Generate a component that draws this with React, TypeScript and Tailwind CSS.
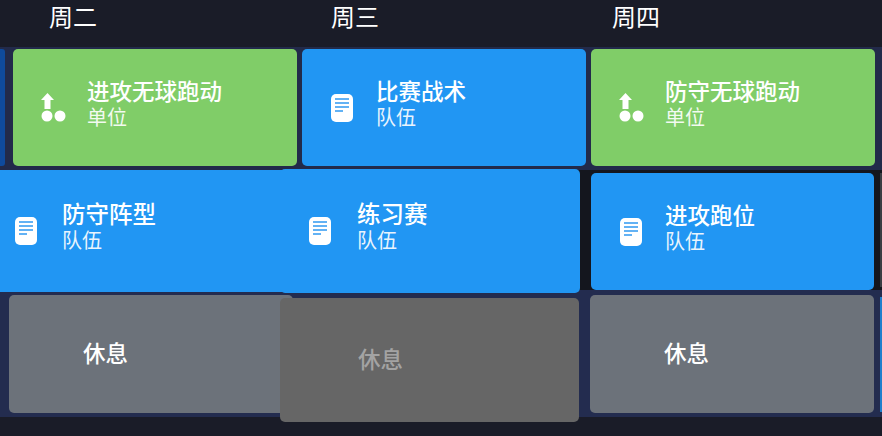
import React from 'react';

const FONT = "font-['Liberation_Sans','Noto_Sans_CJK_SC',sans-serif]";

const UnitIcon = () => (
  <svg width="25" height="29" viewBox="0 0 25 29" fill="white">
    <path d="M6.5 0 L13 7 H9.5 V16 H3.5 V7 H0 Z" />
    <circle cx="6" cy="23" r="5.5" />
    <circle cx="19" cy="23" r="5.5" />
  </svg>
);

const TeamIcon = () => (
  <svg width="22" height="28" viewBox="0 0 22 28">
    <rect x="0" y="0" width="22" height="28" rx="5" fill="white" />
    <path d="M4 5 H18 M4 9 H18 M4 13 H18 M4 17 H12" stroke="#63b2f4" strokeWidth="2.2" />
  </svg>
);

type CardProps = {
  title: string;
  sub?: string;
  kind: 'unit' | 'team' | 'rest';
  className: string;
  textClass?: string;
  labelClass?: string;
  titleClass?: string;
};

const Card = ({
  title,
  sub,
  kind,
  className,
  textClass = 'text-white',
  labelClass = '',
  titleClass = 'text-[22.5px]',
}: CardProps) => (
  <div className={`flex items-center rounded-[5px] ${className}`}>
    {kind === 'rest' ? (
      <div className={`${textClass} mt-[2px] ml-[74px] text-[22.5px] leading-7 font-medium`}>{title}</div>
    ) : (
      <>
        <div className="flex w-[74px] shrink-0 justify-center pl-[6px]">
          {kind === 'unit' ? <UnitIcon /> : <TeamIcon />}
        </div>
        <div className={`-mt-[6px] text-white ${labelClass}`}>
          <div className={`${titleClass} leading-[27px] font-medium`}>{title}</div>
          <div className="text-[20px] leading-[25px] opacity-90">{sub}</div>
        </div>
      </>
    )}
  </div>
);

export default function App() {
  return (
    <div className={`${FONT} relative h-[436px] w-[882px] overflow-hidden bg-[#1a1c28]`}>
      <div className="flex h-[49px]">
        <div className="w-[331px] pl-[49px] text-[24px] leading-[36px] text-white">周二</div>
        <div className="w-[281px] text-[24px] leading-[36px] text-white">周三</div>
        <div className="text-[24px] leading-[36px] text-white">周四</div>
      </div>

      {/* gutter tint behind the rows */}
      <div className="absolute top-[47px] right-0 left-0 h-[123px] bg-[#222a4a]" />
      <div className="absolute top-[170px] right-0 left-0 h-[120px] bg-[#14161e]" />
      <div className="absolute top-[290px] right-0 left-0 h-[127px] bg-[#232c4f]" />

      <div className="relative flex">
        <div className="h-[117px] w-[5px] shrink-0 rounded-r-[3px] bg-[#0f4a9c]" />
        <div className="ml-[8px] flex w-[284px] shrink-0 flex-col">
          <Card title="进攻无球跑动" sub="单位" kind="unit" className="h-[117px] bg-[#80cd68]" />
          <Card
            title="防守阵型"
            sub="队伍"
            kind="team"
            labelClass="ml-[2px]"
            titleClass="text-[23.5px]"
            className="relative z-10 -ml-[38px] mt-[4px] h-[122px] w-[315px] bg-[#2196f3] pl-[11px]"
          />
          <Card title="休息" kind="rest" className="-ml-[4px] mt-[3px] h-[118px] w-[284px] bg-[#6c727a]" />
        </div>
        <div className="ml-[5px] flex w-[284px] shrink-0 flex-col">
          <Card title="比赛战术" sub="队伍" kind="team" className="h-[117px] bg-[#2196f3]" />
          <Card
            title="练习赛"
            sub="队伍"
            kind="team"
            labelClass="ml-[3px]"
            titleClass="text-[23.5px]"
            className="relative z-20 -ml-[22px] mt-[3px] h-[124px] w-[300px] bg-[#2196f3]"
          />
          <Card
            title="休息"
            kind="rest"
            textClass="text-[#a3a3a3]"
            className="relative z-20 -ml-[22px] mt-[5px] h-[124px] w-[299px] bg-[#666666] pl-[4px]"
          />
        </div>
        <div className="ml-[5px] flex w-[284px] shrink-0 flex-col">
          <Card title="防守无球跑动" sub="单位" kind="unit" className="h-[117px] bg-[#80cd68]" />
          <Card title="进攻跑位" sub="队伍" kind="team" className="mt-[7px] h-[117px] w-[283px] bg-[#2196f3]" />
          <Card title="休息" kind="rest" className="-ml-[1px] mt-[5px] h-[118px] w-[284px] bg-[#6c727a]" />
        </div>
        {/* next day's cards peeking in at the right edge */}
        <div className="ml-[5px] flex w-[2px] shrink-0 flex-col">
          <div className="mt-[124px] h-[114px] bg-[#3a3d42]" />
          <div className="mt-[10px] h-[115px] bg-[#1f7fcc]" />
        </div>
      </div>
    </div>
  );
}
